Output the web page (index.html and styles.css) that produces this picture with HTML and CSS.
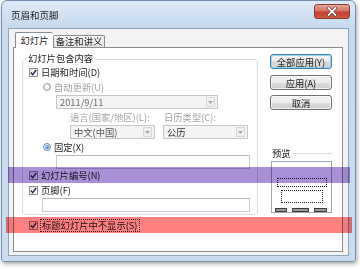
FILE: index.html
```html
<!DOCTYPE html>
<html lang="zh-CN">
<head>
  <meta charset="UTF-8">
  <title>页眉和页脚</title>
  <link rel="stylesheet" href="styles.css">
</head>
<body>
  <div class="window">

    <div class="titlebar">
      <span class="title">页眉和页脚</span>
      <span class="close">
        <svg width="34" height="13" viewBox="0 0 34 13"><path d="M13.5 3 L20.5 10 M20.5 3 L13.5 10" stroke="#5a1e14" stroke-width="3" stroke-linecap="round"/><path d="M13.5 3 L20.5 10 M20.5 3 L13.5 10" stroke="#fff" stroke-width="1.8" stroke-linecap="round"/></svg>
      </span>
    </div>

    <div class="client">
      <div class="tabs">
        <span class="tab active">幻灯片</span>
        <span class="tab">备注和讲义</span>
      </div>

      <div class="page">
        <div class="left">
          <fieldset class="group">
            <legend>幻灯片包含内容</legend>

            <div class="row"><span class="check"><svg width="7" height="7" viewBox="0 0 7 7"><path d="M0.8 3.5 L2.7 5.6 L6.2 1" fill="none" stroke="#1f2a55" stroke-width="1.4"/></svg></span>日期和时间(D)</div>
            <div class="row radio-row disabled"><span class="radio"></span>自动更新(U)</div>
            <div class="combo combo-date"><span class="combo-text">2011/9/11</span><span class="arrow"><svg width="5" height="3" viewBox="0 0 5 3"><path d="M0 0 H5 L2.5 3 Z" fill="#a8a8a8"/></svg></span></div>

            <div class="row labels disabled">
              <span class="lbl-lang">语言(国家/地区)(L):</span>
              <span>日历类型(C):</span>
            </div>
            <div class="combos">
              <div class="combo combo-lang"><span class="combo-text">中文(中国)</span><span class="arrow"><svg width="5" height="3" viewBox="0 0 5 3"><path d="M0 0 H5 L2.5 3 Z" fill="#a8a8a8"/></svg></span></div>
              <div class="combo combo-cal"><span class="combo-text">公历</span><span class="arrow"><svg width="5" height="3" viewBox="0 0 5 3"><path d="M0 0 H5 L2.5 3 Z" fill="#a8a8a8"/></svg></span></div>
            </div>

            <div class="row radio-row"><span class="radio on"></span>固定(X)</div>
            <div class="field field-fixed"></div>

            <div class="row"><span class="check"><svg width="7" height="7" viewBox="0 0 7 7"><path d="M0.8 3.5 L2.7 5.6 L6.2 1" fill="none" stroke="#1f2a55" stroke-width="1.4"/></svg></span>幻灯片编号(N)</div>
            <div class="row row-footer"><span class="check"><svg width="7" height="7" viewBox="0 0 7 7"><path d="M0.8 3.5 L2.7 5.6 L6.2 1" fill="none" stroke="#1f2a55" stroke-width="1.4"/></svg></span>页脚(F)</div>
            <div class="field field-footer"></div>
          </fieldset>

          <div class="row row-title"><span class="check"><svg width="7" height="7" viewBox="0 0 7 7"><path d="M0.8 3.5 L2.7 5.6 L6.2 1" fill="none" stroke="#1f2a55" stroke-width="1.4"/></svg></span><span class="focus">标题幻灯片中不显示(S)</span></div>
        </div>

        <div class="right">
          <button class="btn btn-default">全部应用(Y)</button>
          <button class="btn btn-apply">应用(A)</button>
          <button class="btn btn-cancel">取消</button>

          <div class="preview-label"><span>预览</span></div>
          <div class="preview-box">
            <div class="pv-header"></div>
            <div class="pv-body"></div>
            <div class="pv-footer">
              <span class="pv-slot" style="width: 12px"></span>
              <span class="pv-slot" style="width: 17px"></span>
              <span class="pv-slot" style="width: 13px"></span>
            </div>
          </div>
        </div>
      </div>
    </div>
  </div>

  <div class="band band-purple"></div>
  <div class="band band-red"></div>
</body>
</html>
```

FILE: styles.css
```css
body {
  margin: 0;
  width: 360px;
  height: 269px;
  background: #ffffff;
  font-family: "Noto Sans CJK SC", "Noto Sans", sans-serif;
  font-size: 9.3px;
  color: #1e1e1e;
  position: relative;
  overflow: hidden;
}

.window {
  margin-left: 1px;
  width: 355px;
  height: 262px;
  box-sizing: border-box;
  border: 1px solid #7590ae;
  border-radius: 6px 6px 3px 3px;
  background: linear-gradient(#dde9f6, #c6d9ee 27px, #cbdcf0);
  box-shadow: 1px 2px 4px rgba(0, 0, 0, 0.35);
  padding: 0 6px 5px 6px;
  display: flex;
  flex-direction: column;
}

.titlebar {
  height: 27px;
  display: flex;
  align-items: flex-start;
}

.title {
  margin: 8px 0 0 3px;
  line-height: 12px;
  font-size: 9.5px;
  color: #1a1a1a;
}

.close {
  margin: 3px -1px 0 auto;
  width: 36px;
  height: 15px;
  box-sizing: border-box;
  border: 1px solid #8a3b2f;
  border-radius: 3px;
  background: linear-gradient(#e6a79a, #d27262 45%, #c0412c 55%, #d05a44);
  display: flex;
  align-items: center;
  justify-content: center;
}

.client {
  flex: 1;
  background: #f3f3f3;
  border: 1px solid #8ea5be;
  padding: 3px 5px 3px 4px;
  display: flex;
  flex-direction: column;
}

/* tabs */
.tabs {
  display: flex;
  align-items: flex-end;
  height: 15px;
  padding-left: 2px;
}

.tab {
  height: 12px;
  box-sizing: border-box;
  line-height: 11px;
  padding: 0 4px;
  border: 1px solid #898c95;
  border-bottom: none;
  background: linear-gradient(#f6f6f6, #e4e4e4);
  border-radius: 2px 2px 0 0;
}

.tab.active {
  height: 16px;
  line-height: 14px;
  width: 38px;
  text-align: center;
  padding: 0;
  margin-bottom: -1px;
  background: #ffffff;
  position: relative;
  z-index: 1;
  border-right: none;
}

.tab + .tab {
  width: 52px;
  text-align: center;
  padding: 0;
}

.page {
  flex: 1;
  background: #ffffff;
  border: 1px solid #898c95;
  display: flex;
  padding: 4px 10px 0 8px;
}

.left {
  width: 236px;
}

/* group box */
.group {
  margin: 0;
  padding: 0 6px 2px 6px;
  border: 1px solid #d5dfe5;
  border-radius: 3px;
  min-width: 0;
}

.group legend {
  margin-left: -3px;
  padding: 0 2px 2px;
  line-height: 12px;
}

.row {
  display: flex;
  align-items: center;
  height: 12px;
  line-height: 12px;
  white-space: nowrap;
}

.disabled {
  color: #a3a3a3;
}

.check {
  width: 9px;
  height: 9px;
  box-sizing: border-box;
  border: 1px solid #8e8f8f;
  background: linear-gradient(135deg, #e8e8e8, #ffffff);
  margin-right: 3px;
  display: flex;
  align-items: center;
  justify-content: center;
}

.radio-row {
  margin-top: 3px;
  padding-left: 14px;
}

.radio-row + .field {
  margin-top: 2px;
}

.radio {
  width: 8px;
  height: 8px;
  box-sizing: border-box;
  border: 1px solid #9a9a9a;
  border-radius: 50%;
  background: radial-gradient(circle at 40% 40%, #ffffff, #d8d8d8);
  margin-right: 3px;
  display: flex;
  align-items: center;
  justify-content: center;
}

.radio.on {
  border-color: #6b8bb0;
}

.radio.on::after {
  content: "";
  width: 4px;
  height: 4px;
  border-radius: 50%;
  background: radial-gradient(circle at 35% 35%, #8fc3f0, #2a5ea8);
}

/* combos */
.combo {
  height: 14px;
  box-sizing: border-box;
  border: 1px solid #c6c6c6;
  background: #f4f4f4;
  display: flex;
  align-items: center;
  line-height: 12px;
}

.combo-text {
  padding-left: 3px;
  color: #555;
}

.combo-date {
  margin: 2px 0 0 27px;
  width: 162px;
}

.combo-date .combo-text {
  color: #6d6d6d;
}

.arrow {
  width: 9px;
  height: 10px;
  box-sizing: border-box;
  margin: 0 2px 0 auto;
  border: 1px solid #d8d8d8;
  background: #f0f0f0;
  display: flex;
  align-items: center;
  justify-content: center;
}

.labels {
  margin-top: 2px;
  padding-left: 41px;
}

.lbl-lang {
  width: 94px;
}

.combos {
  display: flex;
  gap: 8px;
  margin: 2px 0 0 41px;
}

.combo-lang,
.combo-cal {
  width: 85px;
}

.combo-cal .combo-text {
  color: #333;
}

.combos + .radio-row {
  margin-top: 2px;
}

/* text fields */
.field {
  height: 14px;
  box-sizing: border-box;
  border: 1px solid #c9ccd2;
  border-top-color: #b3b6bd;
  background: #ffffff;
}

.field-fixed {
  margin-left: 27px;
  width: 194px;
}

.row-footer {
  margin-top: 3px;
}

.field-footer {
  margin: 2px 0 0 13px;
  width: 208px;
}

.row-title {
  margin-top: 4px;
  padding-left: 7px;
}

.focus {
  outline: 1px dotted #333;
  padding: 0 1px;
  line-height: 11px;
}

/* buttons */
.right {
  margin-left: 12px;
  width: 62px;
  display: flex;
  flex-direction: column;
}

.btn {
  height: 15px;
  width: 62px;
  padding: 0;
  font: inherit;
  line-height: 12px;
  color: #1e1e1e;
  border: 1px solid #707070;
  border-radius: 3px;
  background: linear-gradient(#f2f2f2, #ebebeb 50%, #dddddd 50%, #cfcfcf);
  box-shadow: inset 0 0 0 1px rgba(255, 255, 255, 0.7);
}

.btn-default {
  margin-top: 2px;
  border-color: #3c7fb1;
  box-shadow: inset 0 0 0 1px #9fd4ee;
}

.btn-apply {
  margin-top: 6px;
}

.btn-cancel {
  margin-top: 5px;
}

/* preview */
.preview-label {
  margin-top: 37px;
  display: flex;
  align-items: center;
  line-height: 12px;
}

.preview-label span {
  padding: 0 2px;
}

.preview-label::after {
  content: "";
  flex: 1;
  height: 1px;
  background: #d5dfe5;
}

.preview-box {
  margin: 2px 0 0 1px;
  width: 61px;
  height: 52px;
  box-sizing: border-box;
  border: 1px solid #a5a5a5;
  background: #ffffff;
  padding-top: 16px;
}

.pv-header {
  margin-left: 5px;
  width: 50px;
  height: 9px;
  box-sizing: border-box;
  border: 1px dotted #222;
}

.pv-body {
  margin: 3px 0 0 9px;
  width: 42px;
  height: 13px;
  box-sizing: border-box;
  border: 1px dotted #222;
}

.pv-footer {
  display: flex;
  gap: 5px;
  margin: 5px 0 0 3px;
}

.pv-slot {
  height: 4px;
  box-sizing: border-box;
  border: 1px solid #3a3a3a;
  background: #9a9a9a;
}

/* annotation bands, drawn like a highlighter over the dialog */
.band {
  position: absolute;
  height: 16px;
  mix-blend-mode: multiply;
}

.band-purple {
  left: 8px;
  top: 167px;
  width: 342px;
  background: #a98fd5;
}

.band-red {
  left: 6px;
  top: 217px;
  width: 346px;
  background: #ff8080;
}
```
